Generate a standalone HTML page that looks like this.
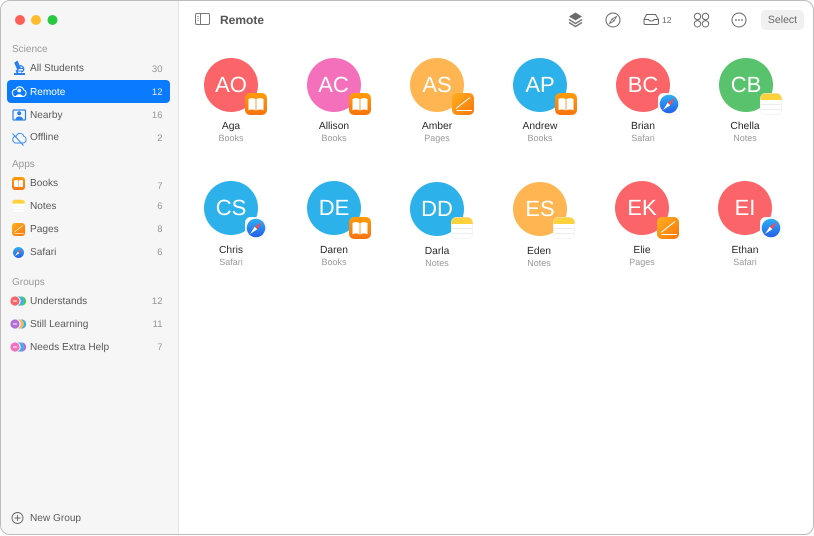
<!DOCTYPE html>
<html><head><meta charset="utf-8"><style>
*{box-sizing:border-box}
html,body{margin:0;padding:0;background:#fff}
body{width:814px;height:536px;position:relative;overflow:hidden;font-family:"Liberation Sans",sans-serif;text-rendering:geometricPrecision}
#win{position:absolute;left:0;top:0;width:814px;height:535px;background:#fff;border:1px solid #bcbcbc;border-radius:10px;overflow:hidden}
#side{position:absolute;left:0;top:0;width:178px;height:536px;background:#f6f6f6;border-right:1px solid #e4e4e4}
.t{position:absolute;white-space:nowrap;line-height:14px}
.s{font-size:10.100px;color:#5a5a5a;left:30px}
.c{font-size:9.500px;color:#969696;right:651.500px;text-align:right;font-weight:normal}
.h{font-size:10px;color:#999;left:12px}
.av{position:absolute;width:54px;height:54px;border-radius:50%;color:#fff;font-size:22px;line-height:54px;text-align:center}
.n{position:absolute;width:90px;text-align:center;font-size:10.300px;color:#2a2a2a;line-height:13px}
.u{position:absolute;width:90px;text-align:center;font-size:9px;color:#999;line-height:12px}
svg{position:absolute;overflow:visible}
#sel{position:absolute;left:761px;top:10px;width:43px;height:20px;background:#f0f0f0;border-radius:5px;font-size:10.500px;color:#666;text-align:center;line-height:21px}
</style></head><body>
<svg width="0" height="0" style="left:0;top:0"><defs>
<linearGradient id="og" x1="0" y1="0" x2="0" y2="1"><stop offset="0" stop-color="#ff9d0a"/><stop offset="1" stop-color="#f8730e"/></linearGradient>
<linearGradient id="og2" x1="0" y1="0" x2="1" y2="1"><stop offset="0" stop-color="#ffb01f"/><stop offset="1" stop-color="#f7760c"/></linearGradient>
<linearGradient id="bg" x1="0" y1="0" x2="0" y2="1"><stop offset="0" stop-color="#2fb0f5"/><stop offset="1" stop-color="#2460ea"/></linearGradient>
<symbol id="books" viewBox="0 0 22 22"><rect width="22" height="22" rx="5" fill="url(#og)"/><path d="M3.500 6C6 4.700 9 4.800 10.600 6.200V17.500C8.800 16.200 6 16.200 3.500 17.200Z M18.500 6C16 4.700 13 4.800 11.400 6.200V17.500C13.200 16.200 16 16.200 18.500 17.200Z" fill="#fff"/></symbol>
<symbol id="notes" viewBox="0 0 22 22"><rect x=".25" y=".25" width="21.500" height="21.500" rx="5" fill="#fff" stroke="#e8e8e8" stroke-width=".5"/><path d="M.5 7V5A4.500 4.500 0 0 1 5 .5H17A4.500 4.500 0 0 1 21.500 5V7Z" fill="#fed23c"/><path d="M1 11.500H21M1 16.500H21" stroke="#e6e6e6" stroke-width=".7"/></symbol>
<symbol id="pages" viewBox="0 0 22 22"><rect width="22" height="22" rx="5" fill="url(#og2)"/><path d="M4 15.500L18 4.500M4.500 17.500H20" stroke="#fff" stroke-width="1.100" fill="none"/></symbol>
<symbol id="safari" viewBox="0 0 22 22"><rect x=".25" y=".25" width="21.500" height="21.500" rx="5" fill="#fff" stroke="#ececec" stroke-width=".5"/><circle cx="11" cy="11" r="9.300" fill="url(#bg)"/><path d="M17 5L12.300 12.300 9.700 9.700Z" fill="#fa4a4a"/><path d="M5 17L12.300 12.300 9.700 9.700Z" fill="#fff"/></symbol>
</defs></svg>
<div id="win">
<div id="side"></div>
</div>
<svg style="left:0;top:0" width="814" height="536">
<circle cx="20" cy="20" r="5" fill="#ff5f57"/><circle cx="36" cy="20" r="5" fill="#febc2e"/><circle cx="52.500" cy="20" r="5" fill="#28c840"/>
<rect x="7" y="80" width="163" height="23" rx="4" fill="#0a7aff"/>
<!-- microscope -->
<g fill="none" stroke="#2a80f0" stroke-width="1.300"><path d="M17.200 61.500L20 67.500 17.800 69.500 15 63Z" fill="#2a80f0"/><path d="M20 65.500C24.500 66.500 25 71 21 72"/><path d="M19 68.500H23M18 71H22" stroke-width="1"/><path d="M14 74H25" stroke-width="2"/><path d="M16.500 70L17.500 73" stroke-width="2"/></g>
<!-- cloud person remote -->
<path d="M15 96.500H22.500C27 96.500 27 90.500 23.800 90C22.500 85.800 17 85.800 16 89.500C13 89 11.500 92 12.800 94.500 13.300 96 14 96.500 15 96.500Z" fill="none" stroke="#fff" stroke-width="1.100"/><circle cx="19.300" cy="90.500" r="1.900" fill="#fff"/><path d="M16 96.500C16 93.500 22.600 93.500 22.600 96.500Z" fill="#fff"/>
<!-- nearby -->
<rect x="13" y="110" width="12.500" height="10" rx="1" fill="none" stroke="#2a80f0" stroke-width="1.200"/><circle cx="19.200" cy="113.300" r="2" fill="#2a80f0"/><path d="M15.500 119.500C15.500 115.500 23 115.500 23 119.500Z" fill="#2a80f0"/>
<!-- offline -->
<path d="M15.500 143H22.500C27 143 27 137 24 136.500C22.700 132.500 17.500 132.500 16.500 136C13.500 135.500 11.500 140 13.800 142 14.300 142.700 14.800 143 15.500 143Z" fill="none" stroke="#3a8cf2" stroke-width="1"/><path d="M12.500 133.500L23.500 145.500" stroke="#3a8cf2" stroke-width="1"/>
<!-- app icons -->
<use href="#books" x="12" y="177" width="13" height="13"/>
<use href="#notes" x="12" y="199.500" width="13" height="13"/>
<use href="#pages" x="12" y="223" width="13" height="13"/>
<use href="#safari" x="12" y="246" width="13" height="13"/>
<!-- groups -->
<g><circle cx="21.600" cy="301" r="4.600" fill="#58c25f"/><circle cx="19" cy="301" r="4.800" fill="#f6f6f6"/><circle cx="19.200" cy="301" r="4.600" fill="#2db1ea"/><circle cx="16" cy="301" r="4.800" fill="#f6f6f6"/><circle cx="15" cy="301" r="4.600" fill="#fb6468"/><rect x="13" y="300.300" width="4" height="1.400" rx=".5" fill="#fff" opacity=".7"/></g>
<g><circle cx="21.600" cy="324" r="4.600" fill="#2db1ea"/><circle cx="19" cy="324" r="4.800" fill="#f6f6f6"/><circle cx="19.200" cy="324" r="4.600" fill="#feb552"/><circle cx="16" cy="324" r="4.800" fill="#f6f6f6"/><circle cx="15" cy="324" r="4.600" fill="#b06fd8"/><rect x="13" y="323.300" width="4" height="1.400" rx=".5" fill="#fff" opacity=".7"/></g>
<g><circle cx="21.600" cy="347" r="4.600" fill="#b06fd8"/><circle cx="19" cy="347" r="4.800" fill="#f6f6f6"/><circle cx="19.200" cy="347" r="4.600" fill="#2db1ea"/><circle cx="16" cy="347" r="4.800" fill="#f6f6f6"/><circle cx="15" cy="347" r="4.600" fill="#f570c0"/><rect x="13" y="346.300" width="4" height="1.400" rx=".5" fill="#fff" opacity=".7"/></g>
<!-- new group -->
<circle cx="17.500" cy="518" r="5.500" fill="none" stroke="#666" stroke-width=".9"/><path d="M17.500 515V521M14.500 518H20.500" stroke="#666" stroke-width=".9"/>
<!-- sidebar toggle -->
<rect x="195.500" y="13.500" width="14" height="11" rx="1.500" fill="none" stroke="#777" stroke-width="1"/><path d="M200.500 14V24" stroke="#777" stroke-width="1"/><path d="M197 16.500H199M197 18.500H199M197 20.500H199" stroke="#999" stroke-width=".8"/>
<!-- stack -->
<path d="M575.500 12.500L582 16.500 575.500 20.500 569 16.500Z" fill="#6a6a6a"/><path d="M569 19.500L575.500 23.500 582 19.500M569 22.500L575.500 26.500 582 22.500" fill="none" stroke="#777" stroke-width="1.500"/>
<!-- compass -->
<circle cx="613" cy="20" r="7" fill="none" stroke="#666" stroke-width="1"/><path d="M616.500 16.500L614 21 612 19Z M609.500 23.500L614 21 612 19Z" fill="none" stroke="#666" stroke-width=".8"/>
<!-- tray -->
<path d="M644 19.500L646.500 14.500H655.500L658.500 19.500V23A1.500 1.500 0 0 1 657 24.500H645.500A1.500 1.500 0 0 1 644 23Z M644 19.500H648.500C649 21.500 653.500 21.500 654 19.500H658.500" fill="none" stroke="#666" stroke-width="1"/>
<!-- grid -->
<g fill="none" stroke="#666" stroke-width="1"><circle cx="697.500" cy="16.500" r="3.200"/><circle cx="705.500" cy="16.500" r="3.200"/><circle cx="697.500" cy="23.800" r="3.200"/><circle cx="705.500" cy="23.800" r="3.200"/></g>
<!-- more -->
<circle cx="739" cy="20" r="7" fill="none" stroke="#666" stroke-width="1"/><circle cx="736" cy="20" r=".9" fill="#666"/><circle cx="739" cy="20" r=".9" fill="#666"/><circle cx="742" cy="20" r=".9" fill="#666"/>
</svg>

<div class="t h" style="top:43px;font-weight:normal">Science</div>
<div class="t s" style="top:62px">All Students</div><div class="t c" style="top:62.500px">30</div>
<div class="t s" style="top:86px;color:#fff">Remote</div><div class="t c" style="top:86px;color:#dbe9ff">12</div>
<div class="t s" style="top:109px">Nearby</div><div class="t c" style="top:109px">16</div>
<div class="t s" style="top:131px">Offline</div><div class="t c" style="top:132px">2</div>
<div class="t h" style="top:158px">Apps</div>
<div class="t s" style="top:177px">Books</div><div class="t c" style="top:180px">7</div>
<div class="t s" style="top:200px">Notes</div><div class="t c" style="top:199.500px">6</div>
<div class="t s" style="top:223px">Pages</div><div class="t c" style="top:222.500px">8</div>
<div class="t s" style="top:246px">Safari</div><div class="t c" style="top:245.500px">6</div>
<div class="t h" style="top:276px">Groups</div>
<div class="t s" style="top:295px">Understands</div><div class="t c" style="top:294.500px">12</div>
<div class="t s" style="top:318px">Still Learning</div><div class="t c" style="top:317.500px">11</div>
<div class="t s" style="top:341px">Needs Extra Help</div><div class="t c" style="top:340.500px">7</div>
<div class="t s" style="top:512px">New Group</div>

<div class="t" style="left:220px;top:13px;font-size:12px;font-weight:bold;color:#555">Remote</div>
<div class="t" style="left:662px;top:13px;font-size:8.500px;color:#666">12</div>
<div id="sel">Select</div>

<div class="av" style="left:204px;top:58px;background:#fb6468">AO</div>
<div class="av" style="left:306.500px;top:58px;background:#f570bb">AC</div>
<div class="av" style="left:410px;top:58px;background:#feb552">AS</div>
<div class="av" style="left:513px;top:58px;background:#2db1ea">AP</div>
<div class="av" style="left:616px;top:58px;background:#fb6468">BC</div>
<div class="av" style="left:719px;top:58px;background:#58c26c">CB</div>
<div class="av" style="left:204px;top:181px;background:#2db1ea">CS</div>
<div class="av" style="left:307px;top:181px;background:#2db1ea">DE</div>
<div class="av" style="left:410px;top:182px;background:#2db1ea">DD</div>
<div class="av" style="left:513px;top:182px;background:#feb552">ES</div>
<div class="av" style="left:615px;top:181px;background:#fb6468">EK</div>
<div class="av" style="left:718px;top:181px;background:#fb6468">EI</div>

<svg style="left:0;top:0" width="814" height="536">
<use href="#books" x="245" y="93" width="22" height="22"/>
<use href="#books" x="349" y="93" width="22" height="22"/>
<use href="#pages" x="452" y="93" width="22" height="22"/>
<use href="#books" x="555" y="93" width="22" height="22"/>
<use href="#safari" x="658" y="93" width="22" height="22"/>
<use href="#notes" x="760" y="93" width="22" height="22"/>
<use href="#safari" x="245" y="217" width="22" height="22"/>
<use href="#books" x="349" y="217" width="22" height="22"/>
<use href="#notes" x="451" y="217" width="22" height="22"/>
<use href="#notes" x="553" y="217" width="22" height="22"/>
<use href="#pages" x="657" y="217" width="22" height="22"/>
<use href="#safari" x="760" y="217" width="22" height="22"/>
</svg>

<div class="n" style="left:186px;top:120px">Aga</div><div class="u" style="left:186px;top:132px">Books</div>
<div class="n" style="left:289px;top:120px">Allison</div><div class="u" style="left:289px;top:132px">Books</div>
<div class="n" style="left:392px;top:120px">Amber</div><div class="u" style="left:392px;top:132px">Pages</div>
<div class="n" style="left:495px;top:120px">Andrew</div><div class="u" style="left:495px;top:132px">Books</div>
<div class="n" style="left:598px;top:120px">Brian</div><div class="u" style="left:598px;top:132px">Safari</div>
<div class="n" style="left:700px;top:120px">Chella</div><div class="u" style="left:700px;top:132px">Notes</div>
<div class="n" style="left:186px;top:244px">Chris</div><div class="u" style="left:186px;top:256px">Safari</div>
<div class="n" style="left:289px;top:244px">Daren</div><div class="u" style="left:289px;top:256px">Books</div>
<div class="n" style="left:392px;top:245px">Darla</div><div class="u" style="left:392px;top:257px">Notes</div>
<div class="n" style="left:494px;top:245px">Eden</div><div class="u" style="left:494px;top:257px">Notes</div>
<div class="n" style="left:597px;top:244px">Elie</div><div class="u" style="left:597px;top:256px">Pages</div>
<div class="n" style="left:700px;top:244px">Ethan</div><div class="u" style="left:700px;top:256px">Safari</div>
</body></html>
